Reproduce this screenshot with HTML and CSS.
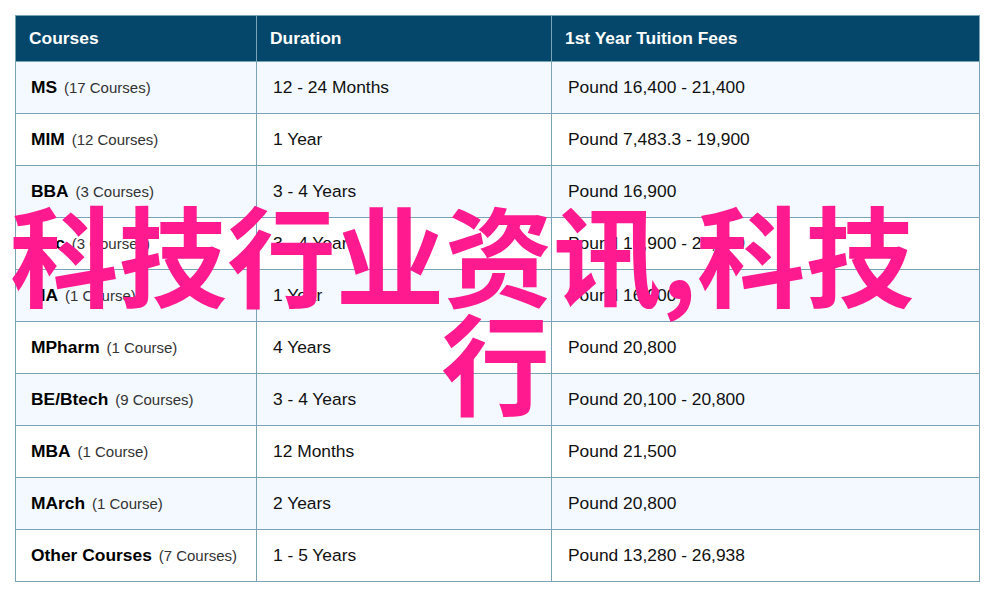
FILE: index.html
```html
<!DOCTYPE html>
<html lang="zh">
<head>
<meta charset="utf-8">
<title>Courses</title>
<link rel="stylesheet" href="styles.css">
</head>
<body>
<table class="fees">
<colgroup><col class="c1"><col class="c2"><col class="c3"></colgroup>
<thead><tr><th>Courses</th><th>Duration</th><th>1st Year Tuition Fees</th></tr></thead>
<tbody>
<tr><td><b>MS</b> <span>(17 Courses)</span></td><td>12 - 24 Months</td><td>Pound 16,400 - 21,400</td></tr>
<tr><td><b>MIM</b> <span>(12 Courses)</span></td><td>1 Year</td><td>Pound 7,483.3 - 19,900</td></tr>
<tr><td><b>BBA</b> <span>(3 Courses)</span></td><td>3 - 4 Years</td><td>Pound 16,900</td></tr>
<tr><td><b>BSc</b> <span>(3 Courses)</span></td><td>3 - 4 Years</td><td>Pound 16,900 - 20,800</td></tr>
<tr><td><b>MA</b> <span>(1 Course)</span></td><td>1 Year</td><td>Pound 16,900</td></tr>
<tr><td><b>MPharm</b> <span>(1 Course)</span></td><td>4 Years</td><td>Pound 20,800</td></tr>
<tr><td><b>BE/Btech</b> <span>(9 Courses)</span></td><td>3 - 4 Years</td><td>Pound 20,100 - 20,800</td></tr>
<tr><td><b>MBA</b> <span>(1 Course)</span></td><td>12 Months</td><td>Pound 21,500</td></tr>
<tr><td><b>MArch</b> <span>(1 Course)</span></td><td>2 Years</td><td>Pound 20,800</td></tr>
<tr><td><b>Other Courses</b> <span>(7 Courses)</span></td><td>1 - 5 Years</td><td>Pound 13,280 - 26,938</td></tr>
</tbody>
</table>
<div class="overlay"><div class="line1">科技行业资讯,科技</div><div class="line2">行</div></div>
</body>
</html>
```
FILE: styles.css
```css
html, body { margin: 0; padding: 0; background: #fff; }
body { width: 991px; height: 597px; overflow: hidden; position: relative; font-family: "Liberation Sans", Arial, sans-serif; }
.fees { border-collapse: collapse; table-layout: fixed; width: 964px; margin: 15px 0 0 15px; color: #111; font-size: 17.4px; }
.c1 { width: 241px; } .c2 { width: 295px; } .c3 { width: 428px; }
.fees th, .fees td { border: 1px solid #7aa3b8; text-align: left; padding: 0; }
.fees th { height: 45px; background: #04476a; color: #fff; font-weight: 700; padding-left: 13px; }
.fees td { height: 51px; padding-left: 16px; }
.fees td:first-child { padding-left: 15px; }
.fees tbody tr:nth-child(odd) td { background: #f3f9ff; }
.fees b { color: #000; }
.fees span { font-size: 15px; color: #333; margin-left: 2px; }
.overlay { position: absolute; left: 0; top: 198px; width: 991px; color: #ff1a8f; font-family: "Noto Sans CJK SC", sans-serif; font-size: 108.6px; font-weight: 700; line-height: 108px; }
.line1 { margin-left: 10px; white-space: nowrap; }
.line2 { text-align: center; }
```
